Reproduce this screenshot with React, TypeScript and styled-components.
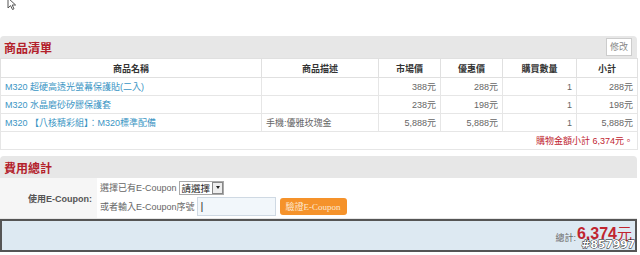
import React from "react";
import styled, { createGlobalStyle } from "styled-components";

const Global = createGlobalStyle`
  html, body { margin: 0; padding: 0; background: #fff; }
  body {
    font-family: "Liberation Sans", Arial, "Noto Sans CJK TC", sans-serif;
    font-size: 9px;
    color: #555;
  }
`;

const Page = styled.div`
  position: relative;
  width: 637px;
  padding-top: 36px;
`;

const Cursor = styled.svg`
  position: absolute;
  left: 7px;
  top: -3px;
`;

const Section = styled.section<{ $gap?: number }>`
  margin-top: ${(p) => p.$gap ?? 0}px;
`;

const SectionHeader = styled.div<{ $h: number }>`
  height: ${(p) => p.$h}px;
  background: #e7e7e7;
  border-radius: 4px 4px 0 0;
  display: flex;
  align-items: center;
  justify-content: space-between;
  padding: 0 5px 0 4px;
`;

const Title = styled.h2`
  margin: 0;
  font-size: 12px;
  font-weight: bold;
  color: #b3202a;
  font-family: "Noto Sans CJK TC", sans-serif;
`;

const EditButton = styled.button`
  height: 18px;
  width: 26px;
  padding: 0;
  border: 1px solid #ccc;
  background: #fff;
  color: #888;
  font-size: 9px;
  font-family: "Noto Sans CJK TC", sans-serif;
  line-height: 16px;
`;

const Table = styled.table`
  width: 637px;
  border-collapse: collapse;
  table-layout: fixed;
`;

const Th = styled.th`
  height: 18px;
  padding: 0 4px;
  border: 1px solid #e0e0e0;
  background: #fff;
  color: #333;
  font-weight: bold;
  font-size: 9px;
  font-family: "Noto Sans CJK TC", sans-serif;
  text-align: center;
`;

const Td = styled.td<{ $align?: string }>`
  height: 17px;
  padding: 0 4px;
  border: 1px solid #e6e6e6;
  text-align: ${(p) => p.$align ?? "left"};
  color: #666;
  font-size: 9px;
  white-space: nowrap;
  overflow: hidden;
`;

const Link = styled.a`
  color: #3a95c4;
  text-decoration: none;
  font-size: 9px;
`;

const TotalNote = styled.td`
  height: 17px;
  padding: 0 4px;
  border: 1px solid #e6e6e6;
  text-align: right;
  color: #c0242f;
  font-size: 9px;
`;

const CouponRow = styled.div`
  display: grid;
  grid-template-columns: 97px 1fr;
  height: 40px;
  border-bottom: 1px solid #e6e6e6;
`;

const CouponLabel = styled.div`
  background: #f6f6f6;
  display: flex;
  align-items: center;
  justify-content: flex-end;
  padding-right: 5px;
  font-weight: bold;
  color: #555;
  font-size: 9px;
`;

const CouponBody = styled.div`
  display: flex;
  flex-direction: column;
  justify-content: center;
  gap: 2px;
  padding-left: 3px;
`;

const Line = styled.div`
  display: flex;
  align-items: center;
  gap: 2px;
  color: #666;
  font-size: 9px;
`;

const Select = styled.div`
  display: flex;
  align-items: center;
  height: 12px;
  border: 1px solid #aaa;
  background: #fff;
  color: #222;
  font-size: 9.5px;
  font-family: "Noto Sans CJK TC", sans-serif;
  padding-left: 2px;
  gap: 2px;
`;

const SelectArrow = styled.span`
  width: 9px;
  height: 10px;
  border: 1px solid #888;
  background: #eee;
  display: flex;
  align-items: center;
  justify-content: center;
  margin-right: 0;
  &::after {
    content: "";
    border-left: 2.5px solid transparent;
    border-right: 2.5px solid transparent;
    border-top: 3px solid #222;
  }
`;

const Input = styled.div`
  width: 74px;
  height: 17px;
  border: 1px solid #cfd9e3;
  background: #f2f7fb;
  display: flex;
  align-items: center;
  padding-left: 3px;
  color: #333;
  font-size: 11px;
`;

const OrangeButton = styled.button`
  margin-left: 2px;
  height: 17px;
  width: 67px;
  border: none;
  border-radius: 3px;
  background: #f5922a;
  color: #fde7cf;
  font-size: 9px;
  font-family: "Liberation Serif", "Noto Sans CJK TC", serif;
  padding: 0;
`;

const TotalBox = styled.div`
  height: 29px;
  border: 2px solid #555;
  background: #dde9f2;
  display: flex;
  align-items: flex-start;
  justify-content: flex-end;
  padding-right: 3px;
  gap: 1px;
`;

const TotalLabel = styled.span`
  color: #666;
  font-size: 9px;
  margin-top: 10px;
`;

const TotalValue = styled.span`
  color: #c0242f;
  font-weight: bold;
  font-size: 16px;
  line-height: 17px;
  margin-top: 4px;
  font-family: "Liberation Sans", "Noto Sans CJK TC", sans-serif;
`;

const Yuan = styled.span`
  font-weight: normal;
  font-size: 15px;
`;

const Watermark = styled.span`
  position: absolute;
  right: 2px;
  bottom: 1px;
  font-size: 11px;
  line-height: 12px;
  font-weight: bold;
  color: #fff;
  font-family: "DejaVu Sans", sans-serif;
  -webkit-text-stroke: 0.8px #000;
  paint-order: stroke fill;
  letter-spacing: -0.2px;
`;

const items = [
  { name: "M320 超硬高透光螢幕保護貼(二入)", desc: "", market: "388元", price: "288元", qty: 1, sub: "288元" },
  { name: "M320 水晶磨砂矽膠保護套", desc: "", market: "238元", price: "198元", qty: 1, sub: "198元" },
  { name: "M320 【八核精彩組】：M320標準配備", desc: "手機:優雅玫瑰金", market: "5,888元", price: "5,888元", qty: 1, sub: "5,888元" },
];

export default function App() {
  return (
    <>
      <Global />
      <Page>
        <Cursor width="12" height="14" viewBox="0 0 12 14">
          <path d="M1 1 L1 11 L3.5 8.6 L5.5 12.5 L7 11.8 L5.2 8 L8.6 8 Z" fill="#fff" stroke="#555" strokeWidth="1" />
        </Cursor>
        <Section>
          <SectionHeader $h={22}>
            <Title>商品清單</Title>
            <EditButton>修改</EditButton>
          </SectionHeader>
          <Table>
            <colgroup>
              <col style={{ width: 261 }} />
              <col style={{ width: 117 }} />
              <col style={{ width: 62 }} />
              <col style={{ width: 62 }} />
              <col style={{ width: 74 }} />
              <col style={{ width: 61 }} />
            </colgroup>
            <thead>
              <tr>
                <Th>商品名稱</Th>
                <Th>商品描述</Th>
                <Th>市場價</Th>
                <Th>優惠價</Th>
                <Th>購買數量</Th>
                <Th>小計</Th>
              </tr>
            </thead>
            <tbody>
              {items.map((it) => (
                <tr key={it.name}>
                  <Td>
                    <Link>{it.name}</Link>
                  </Td>
                  <Td>{it.desc}</Td>
                  <Td $align="right">{it.market}</Td>
                  <Td $align="right">{it.price}</Td>
                  <Td $align="right">{it.qty}</Td>
                  <Td $align="right">{it.sub}</Td>
                </tr>
              ))}
              <tr>
                <TotalNote colSpan={6}>購物金額小計 6,374元。</TotalNote>
              </tr>
            </tbody>
          </Table>
        </Section>
        <Section $gap={6}>
          <SectionHeader $h={22}>
            <Title>費用總計</Title>
          </SectionHeader>
          <CouponRow>
            <CouponLabel>使用E-Coupon:</CouponLabel>
            <CouponBody>
              <Line>
                選擇已有E-Coupon
                <Select>
                  請選擇
                  <SelectArrow />
                </Select>
              </Line>
              <Line>
                或者輸入E-Coupon序號
                <Input>|</Input>
                <OrangeButton>驗證E-Coupon</OrangeButton>
              </Line>
            </CouponBody>
          </CouponRow>
          <TotalBox>
            <TotalLabel>總計:</TotalLabel>
            <TotalValue>
              6,374<Yuan>元</Yuan>
            </TotalValue>
          </TotalBox>
        </Section>
        <Watermark>#857997</Watermark>
      </Page>
    </>
  );
}
